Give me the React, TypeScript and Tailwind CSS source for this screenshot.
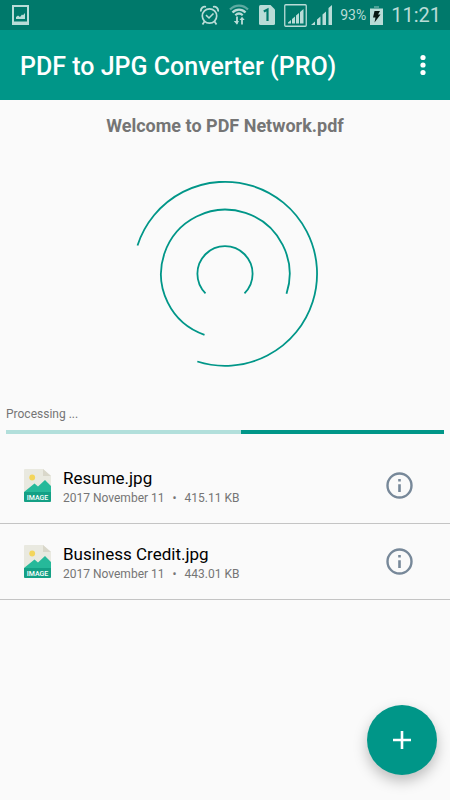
import React from 'react';

const files = [
  { name: 'Resume.jpg', date: '2017 November 11', size: '415.11 KB' },
  { name: 'Business Credit.jpg', date: '2017 November 11', size: '443.01 KB' },
];

function PictureIcon() {
  return (
    <svg className="h-5 w-[17px]" viewBox="0 0 17 20" fill="none" aria-hidden="true">
      <path d="M1 1H16V19H1Z" stroke="currentColor" strokeWidth="2" />
      <path d="M1 16.5H16V19H1Z" fill="currentColor" />
      <path d="M4 14V12L6 10.5L8 12L10 9.5L11 10.2L13 8V14Z" fill="currentColor" />
    </svg>
  );
}

function AlarmIcon() {
  return (
    <svg className="h-[21px] w-[19px]" viewBox="0 0 19 21" fill="none" stroke="currentColor" aria-hidden="true">
      <circle cx="9.5" cy="11" r="7.2" strokeWidth="1.7" />
      <path d="M1 6.5C.4 3.5 3 1 6 1.8M18 6.5C18.6 3.5 16 1 13 1.8" strokeWidth="1.8" />
      <path d="M4.5 16.5L2.5 19.5M14.5 16.5L16.5 19.5" strokeWidth="1.8" />
      <path d="M6 10.2L9 13L13.5 8.5" strokeWidth="1.6" />
    </svg>
  );
}

function WifiIcon() {
  return (
    <svg className="h-[22px] w-5" viewBox="0 0 20 22" fill="none" stroke="currentColor" aria-hidden="true">
      <path d="M1 5.5C6 .2 14 .2 19 5.5" strokeWidth="2.2" opacity=".5" />
      <path d="M3.5 8.5C7.2 4.6 12.8 4.6 16.5 8.5" strokeWidth="2.3" />
      <path d="M6.3 11.2C8.7 9 11.3 9 13.7 11.2" strokeWidth="2.2" />
      <path d="M8 12.5V19.5M13 20.5V14" strokeWidth="1.8" />
      <path d="M4.8 17H10L8 20.8ZM10.5 16L13 12.7L15.7 16Z" fill="currentColor" stroke="none" />
    </svg>
  );
}

function SimIcon() {
  return (
    <svg className="h-5 w-4" viewBox="0 0 16 20" aria-hidden="true">
      <path d="M1.5 0H11.5L16 4.5V18.5Q16 20 14.5 20H1.5Q0 20 0 18.5V1.5Q0 0 1.5 0Z" fill="currentColor" />
      <path d="M4.8 6.5L8.5 4.5V16" fill="none" stroke="#00796b" strokeWidth="2.2" />
    </svg>
  );
}

function BoxedSignalIcon() {
  return (
    <svg className="h-[23px] w-[23px]" viewBox="0 0 23 23" aria-hidden="true">
      <rect x=".75" y=".75" width="21.5" height="21.5" rx="1" fill="none" stroke="currentColor" strokeWidth="1.3" />
      <path d="M4 19.5V18.5L7 16V19.5ZM8 19.5V15L11 12.5V19.5ZM12 19.5V11.5L15 9V19.5ZM16 19.5V8L19.5 5V19.5Z" fill="currentColor" />
    </svg>
  );
}

function SignalIcon() {
  return (
    <svg className="h-5 w-[21px]" viewBox="0 0 21 20" aria-hidden="true">
      <path d="M0 20L4 16.5V20ZM6 20V14.5L9.5 11.5V20ZM11.5 20V9.5L15 6.5V20ZM17.5 20V3L21 0V20Z" fill="currentColor" />
    </svg>
  );
}

function BatteryIcon() {
  return (
    <svg className="h-[19px] w-[13px]" viewBox="0 0 13 19" aria-hidden="true">
      <path d="M4 0H9V2H4Z" fill="currentColor" opacity=".4" />
      <path d="M0 2.5H13V19H0Z" fill="currentColor" />
      <path d="M4.5 5H10L8 8.5H10.5L4.5 16.5L5.5 11.5H3Z" fill="#081713" />
    </svg>
  );
}

function ImageFileIcon() {
  return (
    <svg className="h-[33px] w-[27px] shrink-0" viewBox="0 0 27 33" aria-hidden="true">
      <path d="M1 0H19L27 7V32Q27 33 26 33H1Q0 33 0 32V1Q0 0 1 0Z" fill="#e9e9e0" />
      <path d="M19 0L27 7H19Z" fill="#d9d7ca" />
      <circle cx="8.2" cy="8.5" r="2.9" fill="#f3d55b" />
      <path d="M0 23L10.5 14.5L14 17.5L21 11L27 17V24H0Z" fill="#26b99a" />
      <path d="M0 23H27V32Q27 33 26 33H1Q0 33 0 32Z" fill="#14a085" />
      <text x="13.5" y="30.5" textAnchor="middle" fill="#fff" fontFamily="Roboto, sans-serif" fontSize="7" fontWeight="500">
        IMAGE
      </text>
    </svg>
  );
}

function InfoIcon() {
  return (
    <svg className="h-[27px] w-[27px]" viewBox="0 0 27 27" fill="none" stroke="currentColor" aria-hidden="true">
      <circle cx="13.5" cy="13.5" r="12" strokeWidth="2.4" />
      <path d="M13.5 12.2V20M13.5 7V9.5" strokeWidth="2.6" />
    </svg>
  );
}

export default function App() {
  return (
    <div className="flex min-h-screen flex-col bg-[#fafafa] font-[Roboto,sans-serif] text-black">
      <div className="flex h-[30px] items-center bg-[#00796b] pr-[9px] pl-3 text-[#b9dcd7]">
        <PictureIcon />
        <div className="ml-auto flex items-center">
          <AlarmIcon />
          <span className="ml-[10px] flex"><WifiIcon /></span>
          <span className="ml-[10px] flex"><SimIcon /></span>
          <span className="ml-[9px] flex"><BoxedSignalIcon /></span>
          <span className="ml-1 flex"><SignalIcon /></span>
          <span className="ml-2 text-[14px] leading-5">93%</span>
          <span className="ml-1 flex"><BatteryIcon /></span>
          <span className="ml-2 text-[20px] leading-6">11:21</span>
        </div>
      </div>

      <header className="flex h-[70px] items-center justify-between bg-[#009688] pr-[10px] pl-5 text-white">
        <h1 className="pt-1 text-[25px] leading-8 font-medium whitespace-nowrap">PDF to JPG Converter (PRO)</h1>
        <button type="button" aria-label="More options" className="flex h-10 w-[35px] items-center justify-center">
          <svg className="h-[22px] w-[6px]" viewBox="0 0 6 22" fill="currentColor" aria-hidden="true">
            <circle cx="3" cy="3.5" r="2.6" />
            <circle cx="3" cy="11" r="2.6" />
            <circle cx="3" cy="18.5" r="2.6" />
          </svg>
        </button>
      </header>

      <main>
        <h2 className="pt-[14px] text-center text-[18px] leading-6 font-bold text-[#757575]">Welcome to PDF Network.pdf</h2>

        <svg className="mx-auto mt-10 h-48 w-48" viewBox="0 0 192 192" fill="none" stroke="#009688" strokeWidth="1.8" aria-hidden="true">
          <path d="M8.5 67.5A92 92 0 1 1 68.3 183.5" />
          <path d="M75.5 156.8A64.3 64.3 0 1 1 157.5 115.8" />
          <path d="M76.5 115.3A27.6 27.6 0 1 1 115.5 115.3" />
        </svg>

        <section className="px-[6px] pt-9">
          <p id="progress-label" className="text-[12px] leading-4 text-[#757575]">Processing ...</p>
          <div role="progressbar" aria-labelledby="progress-label" className="mt-2 flex h-1 bg-[#b2dfdb]">
            <div className="ml-auto w-[46.4%] bg-[#009688]" />
          </div>
        </section>

        <ul className="mt-[14px]">
          {files.map((file) => (
            <li key={file.name} className="flex h-[76px] items-center border-b border-[#c4c4c4] pr-[37px] pl-6">
              <ImageFileIcon />
              <div className="ml-3 min-w-0 flex-1">
                <p className="text-[17px] leading-6">{file.name}</p>
                <p className="flex text-[12px] leading-4 text-[#757575]">
                  <span>{file.date}</span>
                  <span className="w-5 text-center">•</span>
                  <span>{file.size}</span>
                </p>
              </div>
              <button type="button" aria-label={`Details of ${file.name}`} className="text-[#778899]">
                <InfoIcon />
              </button>
            </li>
          ))}
        </ul>
      </main>

      <button
        type="button"
        aria-label="Add file"
        className="fixed right-[13px] bottom-[25px] flex h-[70px] w-[70px] items-center justify-center rounded-full bg-[#009688] text-white shadow-[0_6px_14px_rgba(0,0,0,0.25)]"
      >
        <svg className="h-[18px] w-[18px]" viewBox="0 0 18 18" stroke="currentColor" strokeWidth="2.6" aria-hidden="true">
          <path d="M9 0V18M0 9H18" />
        </svg>
      </button>
    </div>
  );
}
